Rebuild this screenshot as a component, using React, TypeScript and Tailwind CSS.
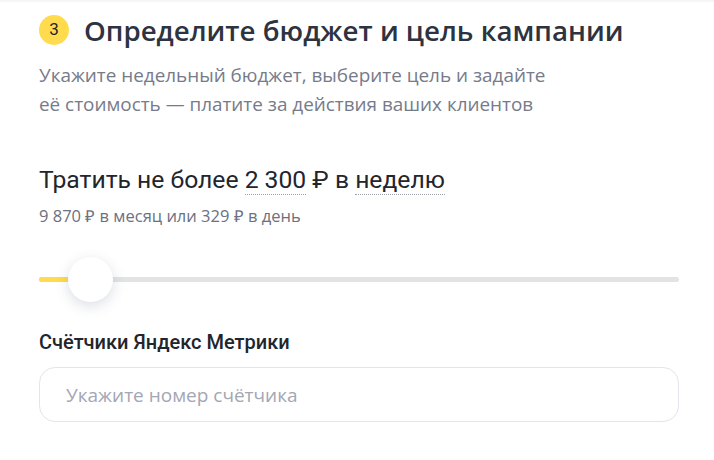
export default function App() {
  const progress = 8;
  return (
    <div className="h-[460px] w-[714px] overflow-hidden bg-white font-['Roboto',sans-serif]">
      <div className="h-[3px] bg-gradient-to-b from-[#f2f2f2] to-white" />
      <div className="px-[39px] pt-[12px]">
        <div className="flex items-center gap-[15px]">
          <div className="flex h-[30px] w-[30px] items-center justify-center rounded-full bg-[#ffdb4d] text-[17px] text-[#22252c]">
            3
          </div>
          <h1 className="font-['Open_Sans',sans-serif] text-[27.7px] font-semibold leading-[30px] text-[#2d3340]">
            Определите бюджет и цель кампании
          </h1>
        </div>

        <p className="mt-[16px] whitespace-nowrap font-['Open_Sans',sans-serif] text-[18.9px] leading-[29px] text-[#767b8a]">
          Укажите недельный бюджет, выберите цель и задайте
          <br />
          её стоимость — платите за действия ваших клиентов
        </p>

        <div className="mt-[46px] text-[24.7px] leading-[30px] text-[#22252c]">
          Тратить не более{" "}
          <span className="border-b border-dotted border-[#9aa0ac]">2 300</span> ₽ в{" "}
          <span className="border-b border-dotted border-[#9aa0ac]">неделю</span>
        </div>
        <div className="mt-[11px] font-['Open_Sans',sans-serif] text-[16.5px] leading-[20px] text-[#6c7080]">
          9 870 ₽ в месяц или 329 ₽ в день
        </div>

        <div className="relative mt-[30px] h-[46px] w-[640px]">
          <div className="absolute left-0 right-0 top-[21px] h-[5px] rounded-full bg-[#e3e3e3]" />
          <div
            className="absolute left-0 top-[21px] h-[5px] rounded-full bg-[#ffdb4d]"
            style={{ width: `${progress}%` }}
          />
          <div className="absolute left-[29px] top-[1px] h-[45px] w-[45px] rounded-full bg-white shadow-[0_4px_14px_rgba(60,70,110,0.18)]" />
        </div>

        <div className="mt-[28px] text-[20px] font-medium leading-[24px] text-[#22252c]">
          Счётчики Яндекс Метрики
        </div>
        <input
          className="mt-[13px] h-[55px] w-[640px] rounded-[16px] border border-[#e4e4ee] px-[26px] font-['Open_Sans',sans-serif] text-[19px] text-[#22252c] outline-none placeholder:text-[#a3a6b4]"
          placeholder="Укажите номер счётчика"
        />
      </div>
    </div>
  );
}
